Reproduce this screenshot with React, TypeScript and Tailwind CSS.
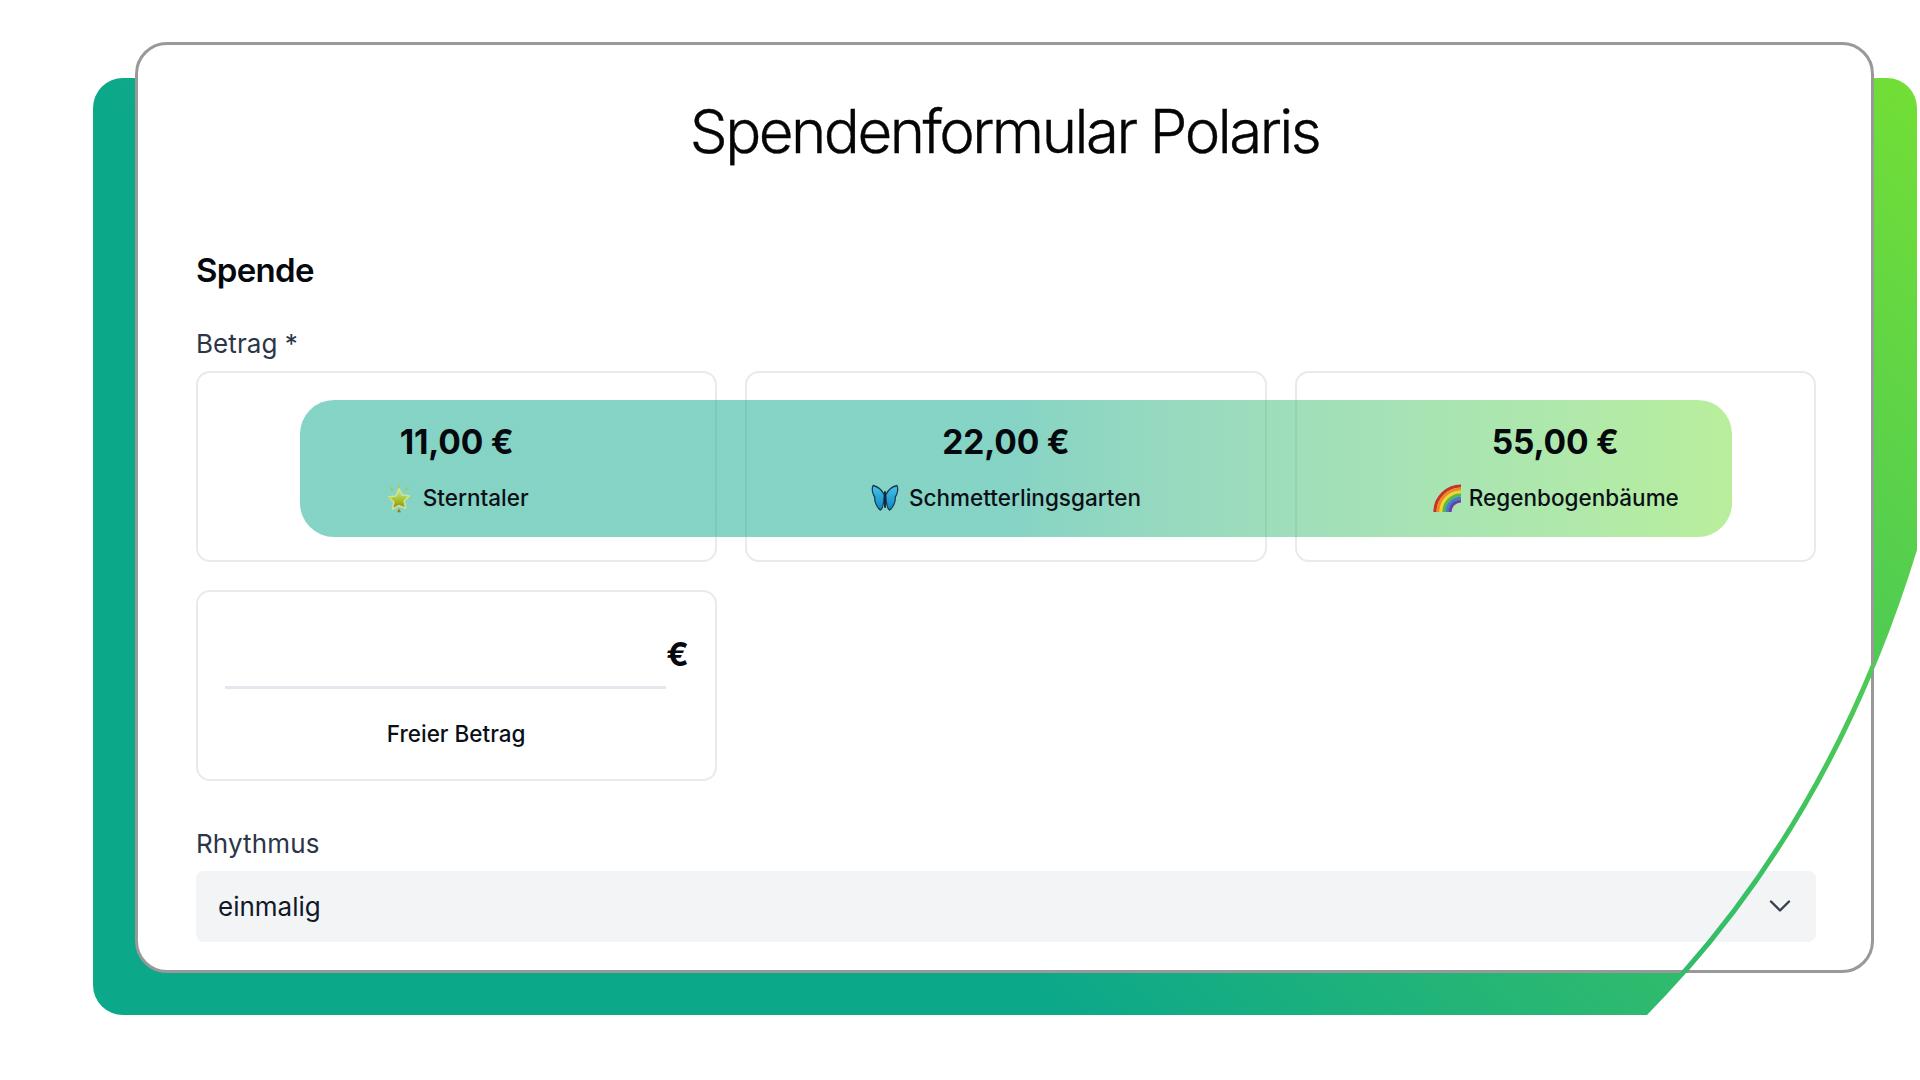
import React from "react";

const EDGE = "M1917 550C1865 720 1780 880 1647 1015";

function Star() {
  return (
    <svg width="28" height="30" viewBox="0 0 28 30" className="shrink-0">
      <defs>
        <linearGradient id="st" x1="0" y1="0" x2="0" y2="1">
          <stop offset="0" stopColor="#d6ec9a" />
          <stop offset="0.55" stopColor="#a3c52f" />
          <stop offset="1" stopColor="#a07d0c" />
        </linearGradient>
      </defs>
      <path d="M14 5.500l3.200 6.600 7.300.9-5.400 5 1.500 7.200L14 22.600l-6.600 3.600 1.500-7.200-5.400-5 7.300-.9z" fill="url(#st)" stroke="#cfe39a" strokeWidth="1.500" strokeLinejoin="round" />
      <path d="M14 .5l1.300 4.500h-2.600z" fill="#b3ca5a" />
      <path d="M4 3l4.400 3.600-1.800 1.300z" fill="#a9c248" />
      <path d="M24 3l-4.400 3.600 1.800 1.300z" fill="#a9c248" />
      <path d="M.5 14l4.500.9-.5 1.500z" fill="#b3ca5a" />
      <path d="M27.500 14l-4.500.9.5 1.500z" fill="#b3ca5a" />
      <path d="M14 25.500l2 3.800h-4z" fill="#a07d0c" />
    </svg>
  );
}

function Butterfly() {
  return (
    <svg width="28" height="28" viewBox="0 0 30 28" preserveAspectRatio="none" className="shrink-0">
      <defs>
        <linearGradient id="bf" x1="0" y1="0" x2="0" y2="1">
          <stop offset="0" stopColor="#45c4e8" />
          <stop offset="1" stopColor="#0e87c2" />
        </linearGradient>
      </defs>
      <path d="M14.200 11C12 6.500 7 2.500 2.200 1.500.6 4.500 1.500 10 4 13c-.4 4 1.500 10 6 13 2.400-.5 3.600-5 4.200-15z" fill="url(#bf)" stroke="#17384f" strokeWidth="1.300" strokeLinejoin="round" />
      <path d="M15.800 11C18 6.500 23 2.500 27.800 1.500c1.600 3 .7 8.500-1.800 11.500.4 4-1.500 10-6 13-2.400-.5-3.600-5-4.200-15z" fill="url(#bf)" stroke="#17384f" strokeWidth="1.300" strokeLinejoin="round" />
      <path d="M15 8v15" stroke="#12222e" strokeWidth="2" strokeLinecap="round" />
    </svg>
  );
}

function Rainbow() {
  const arcs = [
    ["#c9302c", 26],
    ["#ef8a22", 23],
    ["#f2d52f", 20],
    ["#58b947", 17],
    ["#3d7fd0", 14],
    ["#6a3fa8", 11],
  ] as const;
  return (
    <svg width="30" height="30" viewBox="0 0 30 30" className="shrink-0 -mr-[3px]">
      {arcs.map(([c, r]) => (
        <path key={c} d={`M${29 - r} 29A${r} ${r} 0 0 1 29 ${29 - r}`} fill="none" stroke={c} strokeWidth="3.200" />
      ))}
    </svg>
  );
}

function Amount({ value, label, icon }: { value: string; label: string; icon: React.ReactNode }) {
  return (
    <div className="h-[191px] rounded-[14px] border-2 border-[#e9eaee] flex flex-col items-center pt-[45px]">
      <div className="relative z-10 text-[33.500px] leading-[48px] font-bold tracking-[-0.005em] text-[#05080c]">{value}</div>
      <div className="relative z-10 mt-4 flex items-center gap-2.5 text-[22.500px] leading-8 font-medium text-[#0b1016]">
        {icon}
        <span>{label}</span>
      </div>
    </div>
  );
}

export default function App() {
  return (
    <div className="relative w-[1920px] h-[1080px] overflow-hidden bg-white pt-[42px] pl-[135px] font-['Inter',sans-serif]">
      <svg className="absolute left-0 top-0" width="1920" height="1080" viewBox="0 0 1920 1080">
        <defs>
          <linearGradient id="g" gradientUnits="userSpaceOnUse" x1="1060" y1="1000" x2="1920" y2="100">
            <stop offset="0" stopColor="#0ca88a" />
            <stop offset="1" stopColor="#72de36" />
          </linearGradient>
        </defs>
        <path d={`M93 108a30 30 0 0 1 30-30H1887a30 30 0 0 1 30 30V550C1865 720 1780 880 1647 1015H123a30 30 0 0 1-30-30Z`} fill="url(#g)" />
      </svg>

      <div className="relative w-[1739px] h-[931px] rounded-[32px] border-[3px] border-[#999999] bg-white pl-[58px] pr-[55px]">
        <h1 className="pt-[50px] pr-[3px] h-[118px] text-center text-[60px] leading-[72px] font-light tracking-[-0.042em] text-[#050505] [-webkit-text-stroke:0.4px_#050505]">
          Spendenformular Polaris
        </h1>
        <h2 className="mt-[87px] text-[33px] leading-10 font-semibold tracking-[-0.02em] text-[#05080c]">Spende</h2>
        <div className="mt-[38px] text-[26px] leading-8 tracking-[0.003em] text-[#2b3648]">Betrag *</div>

        <div className="relative mt-[11px] grid grid-cols-3 gap-x-7 gap-y-7">
          <Amount value="11,00 €" label="Sterntaler" icon={<Star />} />
          <Amount value="22,00 €" label="Schmetterlingsgarten" icon={<Butterfly />} />
          <Amount value="55,00 €" label="Regenbogenbäume" icon={<Rainbow />} />
          <div className="absolute left-[104px] top-[29px] z-[5] w-[1432px] h-[137px] rounded-[34px] bg-linear-to-r from-[#0ca88a] from-50% to-[#72de36] opacity-50" />

          <div className="h-[191px] rounded-[14px] border-2 border-[#e9eaee] flex flex-col pl-[27px] pr-[28px]">
            <div className="flex items-end">
              <div className="flex-1 h-[97px] border-b-[3px] border-[#e5e6ee]" />
              <div className="w-[21px] mb-[15px] text-[33px] leading-10 font-bold text-[#05080c]">€</div>
            </div>
            <div className="mt-[29px] text-center text-[22.500px] leading-8 font-medium text-[#0b1016]">Freier Betrag</div>
          </div>
        </div>

        <div className="mt-[47px] text-[26px] leading-8 tracking-[0.005em] text-[#2b3648]">Rhythmus</div>
        <div className="mt-[11px] h-[71px] rounded-lg bg-[#f3f4f6] flex items-center justify-between pl-[22px] pr-[25px]">
          <span className="text-[26px] font-normal text-[#111827]">einmalig</span>
          <svg width="22" height="14" viewBox="0 0 22 14" fill="none" className="-mt-[2px]">
            <path d="M2 2.500l9 9 9-9" stroke="#374151" strokeWidth="2.400" strokeLinecap="round" strokeLinejoin="round" />
          </svg>
        </div>
      </div>

      <svg className="absolute left-0 top-0 pointer-events-none" width="1920" height="1080" viewBox="0 0 1920 1080">
        <defs>
          <clipPath id="c">
            <rect x="136" y="43" width="1737" height="930" />
          </clipPath>
        </defs>
        <g clipPath="url(#c)">
          <path d={EDGE} transform="translate(-2 -1)" fill="none" stroke="url(#g)" strokeWidth="5" />
        </g>
      </svg>
    </div>
  );
}
